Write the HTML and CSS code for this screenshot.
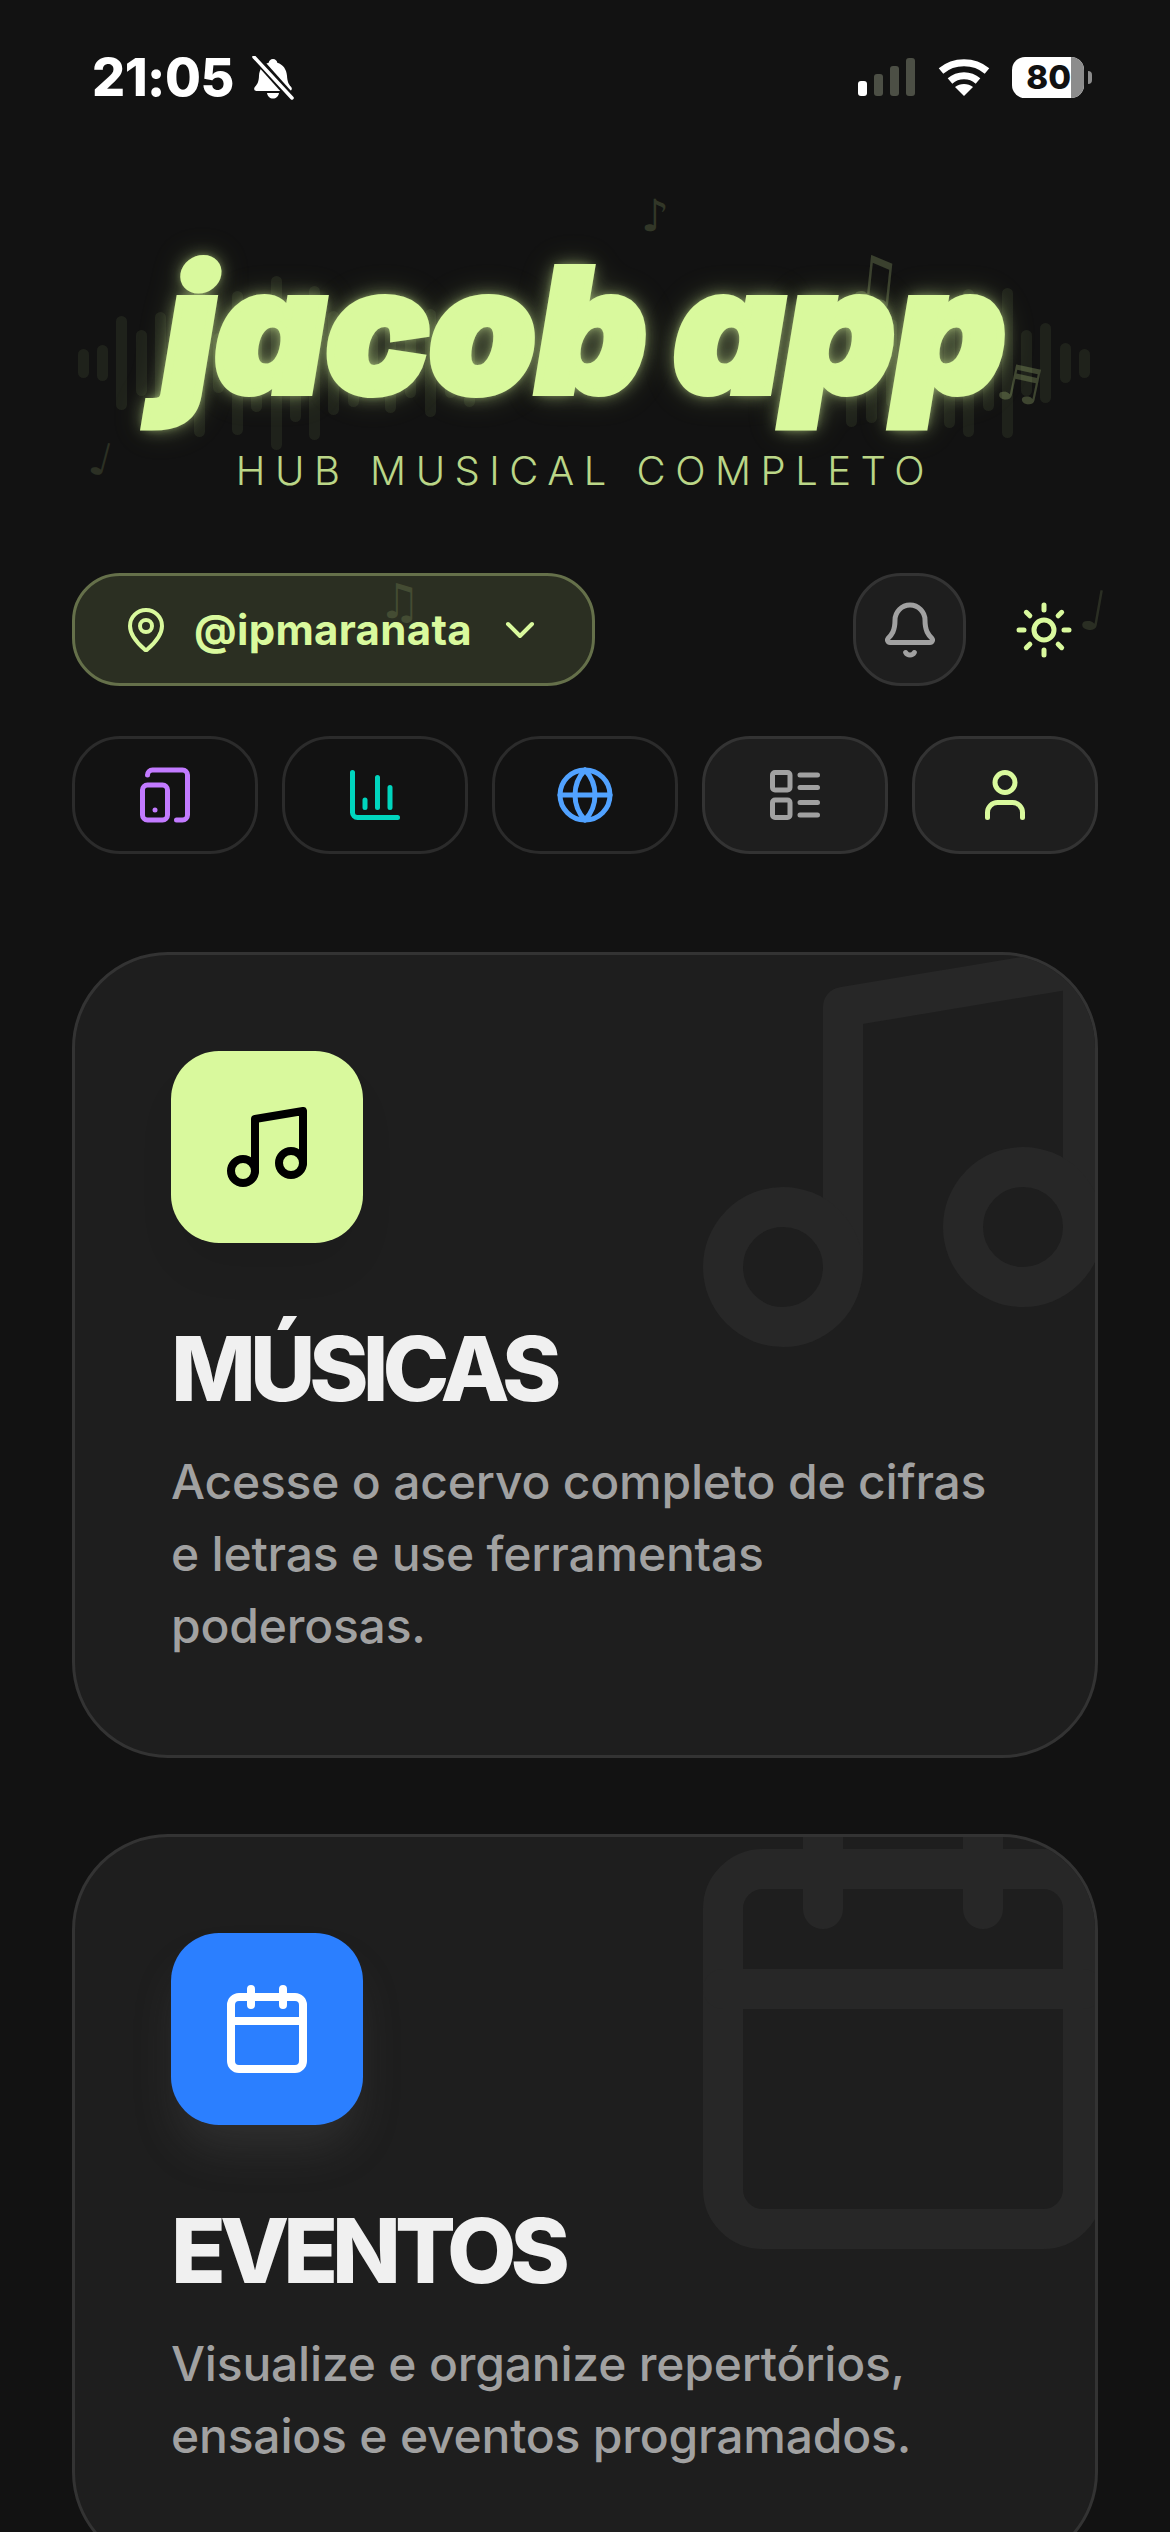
FILE: index.html
```html
<!DOCTYPE html>
<html lang="pt-BR">
<head>
<meta charset="utf-8">
<title>jacob app</title>
<link rel="stylesheet" href="styles.css">
</head>
<body>
<main class="page">
  <div class="status">
    <div class="status-left">
      <span class="time">21:05</span>
      <svg class="mute" viewBox="0 0 44 44"><path fill="#fff" d="M22 3c2.500 0 4 1.800 4.300 3.800 6 1.800 9.200 6.800 9.700 13 .4 5.500 1.200 8 4 11 1.600 1.700.8 4.200-1.600 4.200H5.600c-2.400 0-3.200-2.500-1.600-4.200 2.800-3 3.800-5.500 4-11 .3-6 3.500-11.200 9.700-13C18 4.800 19.500 3 22 3zM16 37h12c-.5 3.500-3 5.500-6 5.500s-5.500-2-6-5.500z"/><path stroke="#121212" stroke-width="8" d="M6 3l34 38"/><path stroke="#fff" stroke-width="3.500" stroke-linecap="round" d="M3 1l38 41"/></svg>
    </div>
    <div class="status-right">
      <svg class="signal" viewBox="0 0 58 38"><rect y="23" width="9" height="15" rx="3" fill="#fff"/><rect x="16" y="16" width="9" height="22" rx="3" fill="#4c4f45"/><rect x="32" y="8" width="9" height="30" rx="3" fill="#4c4f45"/><rect x="48" width="9" height="38" rx="3" fill="#4c4f45"/></svg>
      <svg class="wifi" viewBox="0 0 52 38"><path fill="none" stroke="#fff" stroke-width="7" d="M3 13c13-11 33-11 46 0M12 23c8-7 20-7 28 0"/><path fill="#fff" d="M26 38l-9-9c5-4 13-4 18 0z"/></svg>
      <div class="battery"><span class="battery-level">80</span><span class="battery-rest"></span><span class="battery-nub"></span></div>
    </div>
  </div>

  <header class="brand">
    <svg class="wave" viewBox="0 0 1170 200">
      <g fill="#d9f99d" fill-opacity=".07">
        <rect x="78" y="86" width="11" height="29" rx="5.500"/><rect x="97" y="82" width="11" height="36" rx="5.500"/><rect x="116" y="53" width="11" height="94" rx="5.500"/><rect x="136" y="67" width="11" height="66" rx="5.500"/><rect x="155" y="49" width="11" height="102" rx="5.500"/><rect x="174" y="60" width="11" height="80" rx="5.500"/><rect x="194" y="26" width="11" height="148" rx="5.500"/><rect x="213" y="70" width="11" height="60" rx="5.500"/><rect x="232" y="28" width="11" height="144" rx="5.500"/><rect x="251" y="51" width="11" height="98" rx="5.500"/><rect x="271" y="13" width="11" height="174" rx="5.500"/><rect x="290" y="41" width="11" height="118" rx="5.500"/><rect x="309" y="23" width="11" height="154" rx="5.500"/><rect x="328" y="48" width="11" height="104" rx="5.500"/><rect x="348" y="56" width="11" height="88" rx="5.500"/><rect x="367" y="70" width="11" height="60" rx="5.500"/><rect x="385" y="50" width="11" height="100" rx="5.500"/><rect x="405" y="65" width="11" height="70" rx="5.500"/><rect x="425" y="46" width="11" height="108" rx="5.500"/><rect x="445" y="65" width="11" height="70" rx="5.500"/><rect x="464" y="56" width="11" height="88" rx="5.500"/><rect x="846" y="36" width="11" height="128" rx="5.500"/><rect x="866" y="40" width="11" height="120" rx="5.500"/><rect x="886" y="56" width="11" height="88" rx="5.500"/><rect x="944" y="35" width="11" height="130" rx="5.500"/><rect x="963" y="26" width="11" height="148" rx="5.500"/><rect x="983" y="52" width="11" height="96" rx="5.500"/><rect x="1002" y="25" width="11" height="150" rx="5.500"/><rect x="1021" y="67" width="11" height="66" rx="5.500"/><rect x="1040" y="60" width="11" height="80" rx="5.500"/><rect x="1060" y="80" width="11" height="40" rx="5.500"/><rect x="1079" y="86" width="11" height="29" rx="5.500"/>
      </g>
    </svg>
    <span class="note note-a">♪</span>
    <span class="note note-b">♫</span>
    <span class="note note-c">♬</span>
    <span class="note note-d">♩</span>
    <h1 class="logo">jacob app</h1>
    <p class="tagline">HUB MUSICAL COMPLETO</p>
  </header>

  <div class="toolbar">
    <button class="handle">
      <svg class="i i-small" viewBox="0 0 24 24"><path d="M20 10c0 4.993-5.539 10.193-7.399 11.799a1 1 0 0 1-1.202 0C9.539 20.193 4 14.993 4 10a8 8 0 0 1 16 0"/><circle cx="12" cy="10" r="3"/></svg>
      <span>@ipmaranata</span>
      <svg class="i i-small" viewBox="0 0 24 24"><path d="m6 9 6 6 6-6"/></svg>
      <span class="note note-e">♫</span>
    </button>
    <div class="toolbar-right">
      <button class="round"><svg class="i i-tool c-gray" viewBox="0 0 24 24"><path d="M10.268 21a2 2 0 0 0 3.464 0"/><path d="M3.262 15.326A1 1 0 0 0 4 17h16a1 1 0 0 0 .74-1.673C19.410 13.956 18 12.499 18 8A6 6 0 0 0 6 8c0 4.499-1.411 5.956-2.738 7.326"/></svg></button>
      <button class="plain"><svg class="i i-tool c-lime" viewBox="0 0 24 24"><circle cx="12" cy="12" r="4"/><path d="M12 2v2M12 20v2M4.930 4.930l1.410 1.410M17.660 17.660l1.410 1.410M2 12h2M20 12h2M6.340 17.660l-1.410 1.410M19.070 4.930l-1.410 1.410"/></svg></button>
      <span class="note note-f">♩</span>
    </div>
  </div>

  <nav class="tabs">
    <button class="tab"><svg class="i i-tool c-purple" viewBox="0 0 24 24"><rect width="10" height="14" x="3" y="8" rx="2"/><path d="M5 4a2 2 0 0 1 2-2h12a2 2 0 0 1 2 2v16a2 2 0 0 1-2 2h-2.400"/><path d="M8 18h.01"/></svg></button>
    <button class="tab"><svg class="i i-tool c-teal" viewBox="0 0 24 24"><path d="M3 3v16a2 2 0 0 0 2 2h16"/><path d="M18 17V9M13 17V5M8 17v-3"/></svg></button>
    <button class="tab"><svg class="i i-tool c-blue" viewBox="0 0 24 24"><circle cx="12" cy="12" r="10"/><path d="M12 2a14.500 14.500 0 0 0 0 20 14.500 14.500 0 0 0 0-20"/><path d="M2 12h20"/></svg></button>
    <button class="tab tab-on"><svg class="i i-tool c-gray" viewBox="0 0 24 24"><rect width="7" height="7" x="3" y="3" rx="1"/><rect width="7" height="7" x="3" y="14" rx="1"/><path d="M14 4h7M14 9h7M14 15h7M14 20h7"/></svg></button>
    <button class="tab tab-on"><svg class="i i-tool c-lime" viewBox="0 0 24 24"><path d="M19 21v-2a4 4 0 0 0-4-4H9a4 4 0 0 0-4 4v2"/><circle cx="12" cy="7" r="4"/></svg></button>
  </nav>

  <article class="card card-music">
    <svg class="i card-bg" viewBox="0 0 24 24"><path d="M9 18V5l12-2v13"/><circle cx="6" cy="18" r="3"/><circle cx="18" cy="16" r="3"/></svg>
    <div class="tile tile-lime"><svg class="i tile-i" viewBox="0 0 24 24"><path d="M9 18V5l12-2v13"/><circle cx="6" cy="18" r="3"/><circle cx="18" cy="16" r="3"/></svg></div>
    <h2 class="card-title">MÚSICAS</h2>
    <p class="card-text">Acesse o acervo completo de cifras e letras e use ferramentas poderosas.</p>
  </article>

  <article class="card card-events">
    <svg class="i card-bg" viewBox="0 0 24 24"><path d="M8 2v4M16 2v4"/><rect width="18" height="18" x="3" y="4" rx="2"/><path d="M3 10h18"/></svg>
    <div class="tile tile-blue"><svg class="i tile-i" viewBox="0 0 24 24"><path d="M8 2v4M16 2v4"/><rect width="18" height="18" x="3" y="4" rx="2"/><path d="M3 10h18"/></svg></div>
    <h2 class="card-title">EVENTOS</h2>
    <p class="card-text">Visualize e organize repertórios, ensaios e eventos programados.</p>
  </article>
</main>
</body>
</html>
```
FILE: styles.css
```css
* { box-sizing: border-box; }
html, body { margin: 0; height: 2532px; overflow: hidden; background: #121212; }
body { font-family: Inter, "Liberation Sans", sans-serif; color: #f0f0f0; }
button { font: inherit; padding: 0; cursor: pointer; background: none; border: 0; }
h1, h2, p { margin: 0; }

.page { padding: 0 72px; width: 1170px; }

.status { height: 120px; display: flex; justify-content: space-between; align-items: flex-start; padding: 53px 14px 0 20px; }
.status-left { display: flex; align-items: center; gap: 17px; }
.time { font-size: 52px; font-weight: 800; line-height: 50px; color: #fff; letter-spacing: -.5px; }
.mute { width: 44px; height: 44px; fill: none; }
.status-right { display: flex; align-items: center; height: 50px; margin-top: -1px; }
.signal { width: 58px; height: 38px; margin-right: 22px; }
.wifi { width: 52px; height: 38px; margin-right: 22px; }
.battery { position: relative; width: 72px; height: 41px; border-radius: 13px; background: #fff; display: flex; }
.battery-level { width: 59px; font-size: 33px; font-weight: 800; line-height: 41px; text-align: right; color: #111; }
.battery-rest { flex: 1; background: #8c8c8c; border-radius: 0 13px 13px 0; }
.battery-nub { position: absolute; left: 76px; top: 14px; width: 4px; height: 13px; border-radius: 0 6px 6px 0; background: #8c8c8c; }

.brand { position: relative; text-align: center; }
.wave { position: absolute; left: -72px; top: 143px; width: 1170px; height: 200px; }
.note { position: absolute; font-family: "DejaVu Sans", sans-serif; font-weight: 400; color: #d9f99d; opacity: .16; line-height: 1; }
.note-a { left: 569px; top: 74px; font-size: 44px; }
.note-b { left: 773px; top: 128px; font-size: 64px; opacity: .2; transform: rotate(6deg); }
.note-c { left: 925px; top: 240px; font-size: 50px; opacity: .22; transform: rotate(12deg); }
.note-d { left: 18px; top: 316px; font-size: 46px; opacity: .13; transform: rotate(15deg); }
.logo { position: relative; font-size: 170px; font-weight: 900; font-style: italic; line-height: 170px; letter-spacing: 1px; word-spacing: -8px; color: #d9f99d; padding-top: 125px; white-space: nowrap; -webkit-text-stroke: 8px #d9f99d; text-shadow: 0 0 8px rgba(217,249,157,.75), 0 0 18px rgba(217,249,157,.65), 0 0 34px rgba(217,249,157,.25); }
.tagline { position: relative; font-size: 40px; font-weight: 300; line-height: 50px; letter-spacing: 9.500px; color: #d9f99d; opacity: .85; margin-top: 31px; }

.toolbar { display: flex; justify-content: space-between; align-items: center; height: 113px; margin-top: 77px; }
.handle { position: relative; display: flex; align-items: center; gap: 24px; height: 113px; padding: 0 48px 0 47px; border: 3px solid #65704a; border-radius: 48px; background: #2b2f22; color: #d9f99d; font-size: 42px; font-weight: 700; letter-spacing: .3px; white-space: nowrap; }
.toolbar-right { position: relative; display: flex; align-items: center; gap: 48px; padding-right: 24px; }
.round { display: flex; align-items: center; justify-content: center; width: 113px; height: 113px; border: 3px solid #333; border-radius: 48px; background: #1e1e1e; }
.plain { display: flex; align-items: center; justify-content: center; width: 60px; height: 60px; }
.note-e { left: 303px; top: 1px; font-size: 48px; opacity: .14; }
.note-f { right: -8px; top: 10px; font-size: 56px; opacity: .12; transform: rotate(10deg); }

.i { fill: none; stroke: currentColor; stroke-width: 2; stroke-linecap: round; stroke-linejoin: round; display: block; }
.i-small { width: 48px; height: 48px; flex: none; }
.i-tool { width: 60px; height: 60px; }

.tabs { display: grid; grid-template-columns: repeat(5, 1fr); gap: 24px; margin-top: 50px; }
.tab { display: flex; align-items: center; justify-content: center; height: 118px; border: 3px solid #2b2b2b; border-radius: 48px; }
.tab-on { background: #1e1e1e; border-color: #333; }
.c-purple { color: #c27aff; }
.c-teal { color: #00d5be; }
.c-blue { color: #51a2ff; }
.c-gray { color: #a1a1a1; }
.c-lime { color: #d9f99d; }

.card { position: relative; overflow: hidden; padding: 96px 96px 93px; border: 3px solid #333; border-radius: 96px; background: #1e1e1e; margin-top: 98px; }
.card-events { margin-top: 76px; }
.card-bg { position: absolute; right: -48px; top: -48px; width: 480px; height: 480px; color: #272727; }
.tile { position: relative; display: flex; align-items: center; justify-content: center; width: 192px; height: 192px; border-radius: 48px; }
.tile-lime { background: #d9f99d; box-shadow: 0 30px 45px -9px rgba(0,0,0,.08); color: #000; }
.tile-blue { background: #2b7fff; box-shadow: 0 30px 45px -9px rgba(90,90,90,.3); color: #fff; }
.tile-i { width: 96px; height: 96px; }
.card-title { position: relative; font-size: 90px; font-weight: 800; line-height: 108px; letter-spacing: -6px; margin-top: 72px; color: #f0f0f0; }
.card-text { position: relative; font-size: 48px; font-weight: 500; line-height: 72px; letter-spacing: -.2px; color: #a1a1a1; margin-top: 23px; }
```
